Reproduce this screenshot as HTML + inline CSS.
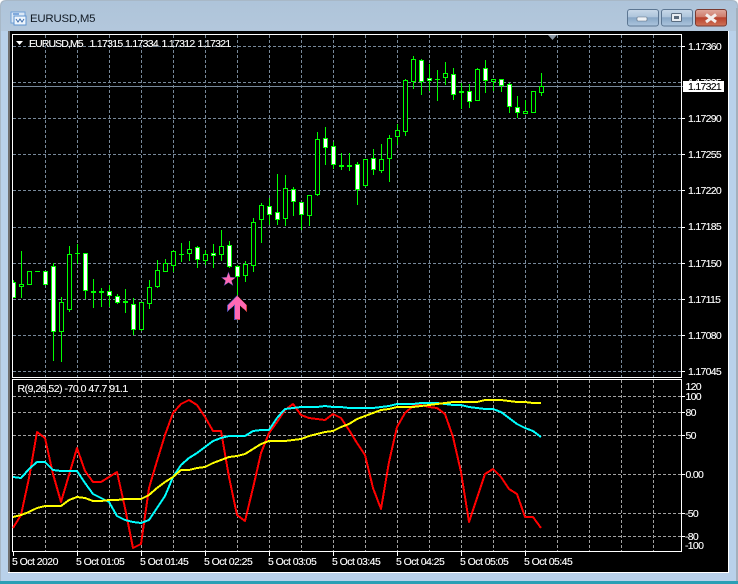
<!DOCTYPE html>
<html>
<head>
<meta charset="utf-8">
<style>
html,body{margin:0;padding:0;width:738px;height:584px;overflow:hidden;background:#fff}
svg{display:block}
text{font-family:"Liberation Sans",sans-serif;font-size:10.5px;fill:#fff;letter-spacing:-.7px;stroke:#fff;stroke-width:.12px}
.t{letter-spacing:-.55px}
</style>
</head>
<body>
<svg width="738" height="584" viewBox="0 0 738 584" xmlns="http://www.w3.org/2000/svg">
<defs>
<linearGradient id="tb" x1="0" y1="0" x2="0" y2="1"><stop offset="0" stop-color="#aec4da"/><stop offset=".06" stop-color="#b4c8dc"/><stop offset="1" stop-color="#bfd4e9"/></linearGradient>
<linearGradient id="btn" x1="0" y1="0" x2="0" y2="1"><stop offset="0" stop-color="#c9d9e9"/><stop offset=".45" stop-color="#aec5dc"/><stop offset=".5" stop-color="#88a7c6"/><stop offset="1" stop-color="#adc6de"/></linearGradient>
<linearGradient id="cls" x1="0" y1="0" x2="0" y2="1"><stop offset="0" stop-color="#dfa99d"/><stop offset=".45" stop-color="#cf7d6c"/><stop offset=".5" stop-color="#b8412c"/><stop offset="1" stop-color="#cf7458"/></linearGradient>
<clipPath id="pl"><rect x="13" y="35" width="668" height="342"/></clipPath>
</defs>

<!-- window frame -->
<path d="M0 6Q0 0 6 0H732Q738 0 738 6V584H0Z" fill="#a8b8c7"/>
<path d="M1 7Q1 1 7 1H731Q737 1 737 7V581H1Z" fill="url(#tb)"/>
<rect x="1" y="31" width="8" height="550" fill="#b9d1ea"/>
<rect x="729" y="31" width="7" height="550" fill="#b9d1ea"/>
<rect x="1" y="573" width="735" height="8" fill="#b9d1ea"/>
<rect x="0" y="581" width="738" height="3" fill="#2a9fb5"/>
<rect x="736" y="8" width="2" height="573" fill="#a3b0bc"/>
<rect x="8" y="31" width="721" height="542" fill="#fff"/>
<rect x="8" y="31" width="2" height="541" fill="#6f6f6f"/>
<rect x="10" y="31" width="718" height="541" fill="#000"/>

<!-- title -->
<g shape-rendering="crispEdges">
<rect x="11" y="12" width="14" height="11" fill="#dbe8f6" stroke="#6f9fd6"/>
<rect x="14" y="16" width="12" height="9" fill="#eef5fc" stroke="#5f93cf"/>
</g>
<path d="M16 19l2 3 2-3 2 3 2-3" fill="none" stroke="#3f6fae" stroke-width="1"/>
<rect x="13" y="13" width="6" height="2" fill="#7fa9dd"/>
<text x="30" y="22" style="font-size:11.4px;fill:#111a24;stroke:none;letter-spacing:-.2px">EURUSD,M5</text>

<!-- buttons -->
<rect x="627.5" y="9.5" width="31" height="16.5" rx="2.5" fill="url(#btn)" stroke="#5c7692"/>
<rect x="637" y="17" width="10" height="4" rx="1" fill="#eef2f6" stroke="#5a6c80" stroke-width=".6"/>
<rect x="661.5" y="9.5" width="31" height="16.5" rx="2.5" fill="url(#btn)" stroke="#5c7692"/>
<rect x="671.5" y="13.5" width="10" height="8" rx="1" fill="#e8edf3" stroke="#5a6c80"/>
<rect x="674" y="16" width="5" height="3" fill="#5b6b7d"/>
<rect x="695.5" y="9.5" width="31" height="16.5" rx="2.5" fill="url(#cls)" stroke="#7a3a30"/>
<path d="M706 14.5l10 7.5M716 14.5l-10 7.5" stroke="#f3eeec" stroke-width="3"/>

<!-- main grid -->
<g shape-rendering="crispEdges" fill="none" stroke="#778899" stroke-dasharray="3 2">
<path d="M13 46.5H681M13 82.5H681M13 118.5H681M13 154.5H681M13 190.5H681M13 227.5H681M13 263.5H681M13 299.5H681M13 335.5H681M13 371.5H681"/>
<path d="M45.5 35V377M77.5 35V377M109.5 35V377M141.5 35V377M173.5 35V377M205.5 35V377M237.5 35V377M269.5 35V377M301.5 35V377M333.5 35V377M365.5 35V377M397.5 35V377M429.5 35V377M461.5 35V377M493.5 35V377M525.5 35V377M557.5 35V377M589.5 35V377M621.5 35V377M653.5 35V377"/>
</g>
<rect x="13" y="86" width="670" height="1" fill="#778899"/>

<!-- candles -->
<g clip-path="url(#pl)" shape-rendering="crispEdges" stroke="#00ff00" stroke-width="1">
<path fill="none" d="M13.5 280V298M21.5 251V298M53.5 263V361M61.5 297V362M69.5 246V312M77.5 244V264M85.5 253V299M93.5 279V308M101.5 288V307M109.5 285V307M117.5 294V304M125.5 289V313M133.5 298V335M141.5 302V331M149.5 280V309M157.5 260V288M165.5 259V272M173.5 250V272M181.5 243V262M189.5 241V261M197.5 246V268M205.5 250V265M213.5 244V268M221.5 230V261M229.5 241V268M237.5 265V295M245.5 261V282M253.5 218V272M261.5 203V243M269.5 198V225M277.5 174V225M285.5 175V226M293.5 187V216M301.5 202V230M309.5 195V226M317.5 132V196M325.5 127V165M333.5 142V169M341.5 153V170M349.5 153V171M357.5 162V205M365.5 159V187M373.5 149V175M381.5 144V173M389.5 135V182M397.5 124V145M405.5 79V136M413.5 56V89M421.5 59V95M429.5 64V91M437.5 70V101M445.5 62V85M453.5 68V100M461.5 83V109M469.5 84V108M477.5 68V101M485.5 60V93M493.5 79V91M501.5 79V92M509.5 83V113M517.5 96V118M525.5 100V114M541.5 73V96"/>
<path fill="none" d="M35 271.5H40M75 253.5H80M179 254.5H184M435 79.5H440"/>
<path fill="#00ff00" d="M91.5 291.5h4v1h-4zM99.5 291.5h4v1h-4zM123.5 301.5h4v1h-4zM339.5 165.5h4v1h-4zM347.5 165.5h4v1h-4zM459.5 91.5h4v1h-4z"/>
<path fill="#000" d="M19.5 284.5h4v2h-4zM27.5 271.5h4v13h-4zM59.5 302.5h4v29h-4zM67.5 254.5h4v55h-4zM139.5 302.5h4v27h-4zM147.5 287.5h4v16h-4zM155.5 270.5h4v16h-4zM163.5 263.5h4v8h-4zM171.5 251.5h4v14h-4zM187.5 249.5h4v4h-4zM203.5 254.5h4v6h-4zM219.5 246.5h4v8h-4zM243.5 264.5h4v11h-4zM251.5 222.5h4v43h-4zM259.5 205.5h4v14h-4zM283.5 188.5h4v30h-4zM307.5 195.5h4v20h-4zM315.5 139.5h4v55h-4zM363.5 159.5h4v26h-4zM379.5 159.5h4v11h-4zM387.5 138.5h4v20h-4zM395.5 130.5h4v6h-4zM403.5 80.5h4v51h-4zM411.5 59.5h4v22h-4zM443.5 73.5h4v4h-4zM475.5 69.5h4v31h-4zM491.5 79.5h4v2h-4zM523.5 111.5h4v2h-4zM531.5 91.5h4v21h-4zM539.5 86.5h4v6h-4z"/>
<path fill="#fff" d="M11.5 282.5h4v15h-4zM43.5 271.5h4v13h-4zM51.5 266.5h4v65h-4zM83.5 253.5h4v37h-4zM107.5 291.5h4v4h-4zM115.5 296.5h4v6h-4zM131.5 304.5h4v25h-4zM195.5 247.5h4v12h-4zM211.5 253.5h4v2h-4zM227.5 245.5h4v21h-4zM235.5 266.5h4v10h-4zM267.5 206.5h4v8h-4zM275.5 212.5h4v7h-4zM291.5 189.5h4v12h-4zM299.5 202.5h4v12h-4zM323.5 138.5h4v9h-4zM331.5 146.5h4v18h-4zM355.5 164.5h4v25h-4zM371.5 158.5h4v11h-4zM419.5 60.5h4v21h-4zM427.5 78.5h4v2h-4zM451.5 74.5h4v20h-4zM467.5 91.5h4v10h-4zM483.5 68.5h4v12h-4zM499.5 79.5h4v6h-4zM507.5 84.5h4v22h-4zM515.5 107.5h4v5h-4z"/>
</g>

<!-- star and arrow -->
<polygon points="228.5,271.5 230.5,277 236,277.2 231.7,280.6 233.3,286 228.5,282.8 223.7,286 225.3,280.6 221,277.2 226.5,277" fill="#3a3f9a"/>
<polygon points="228.5,272.5 230.3,277.5 235.3,277.7 231.3,280.7 232.8,285 228.5,282.2 224.5,285 225.8,280.7 222,277.7 226.8,277.5" fill="#ff69b4"/>
<g shape-rendering="crispEdges">
<polygon points="237,295.5 247,305 247,312 240,306 240,320 237,320" fill="#d0403a"/>
<polygon points="237,295.5 227,305 227,312 234,306 234,320 237,320" fill="#4a4fb0"/>
<polygon points="237,296 246,305 246,310.5 239,304.5 239,319 235,319 235,304.5 228,310.5 228,305" fill="#ff69b4"/>
<rect x="235" y="303" width="5" height="16" fill="#ff69b4"/>
</g>

<!-- plot borders -->
<g shape-rendering="crispEdges" fill="none" stroke="#fff">
<rect x="12.5" y="34.5" width="669" height="343"/>
<rect x="12.5" y="379.5" width="669" height="172"/>
</g>
<polygon points="548,35 557,35 552.5,40" fill="#8a96a3"/>
<polygon points="16,41 23,41 19.5,45" fill="#fff"/>

<!-- header text -->
<text x="29" y="47" style="letter-spacing:-.9px">EURUSD,M5</text>
<text x="89.5" y="47">1.17315</text>
<text x="125" y="47">1.17334</text>
<text x="161.5" y="47">1.17312</text>
<text x="197.5" y="47">1.17321</text>

<!-- price axis -->
<g shape-rendering="crispEdges" fill="#fff">
<rect x="682" y="46" width="3" height="1"/><rect x="682" y="118" width="3" height="1"/><rect x="682" y="154" width="3" height="1"/><rect x="682" y="190" width="3" height="1"/><rect x="682" y="227" width="3" height="1"/><rect x="682" y="263" width="3" height="1"/><rect x="682" y="299" width="3" height="1"/><rect x="682" y="335" width="3" height="1"/><rect x="682" y="371" width="3" height="1"/>
</g>
<text x="688" y="50">1.17360</text>
<text x="688" y="86">1.17325</text>
<text x="688" y="122">1.17290</text>
<text x="688" y="158">1.17255</text>
<text x="688" y="194">1.17220</text>
<text x="688" y="230">1.17185</text>
<text x="688" y="267">1.17150</text>
<text x="688" y="303">1.17115</text>
<text x="688" y="339">1.17080</text>
<text x="688" y="375">1.17045</text>
<rect x="683" y="81" width="41" height="11" fill="#fff"/>
<text x="688" y="90" style="fill:#000;stroke:#000">1.17321</text>

<!-- sub window grid -->
<g shape-rendering="crispEdges" fill="none" stroke="#a2a2a2" stroke-dasharray="3 2">
<path d="M13 396.5H681M13 412.5H681M13 435.5H681M13 474.5H681M13 513.5H681M13 536.5H681"/>
<path d="M45.5 380V551M77.5 380V551M109.5 380V551M141.5 380V551M173.5 380V551M205.5 380V551M237.5 380V551M269.5 380V551M301.5 380V551M333.5 380V551M365.5 380V551M397.5 380V551M429.5 380V551M461.5 380V551M493.5 380V551M525.5 380V551M557.5 380V551M589.5 380V551M621.5 380V551M653.5 380V551"/>
</g>

<!-- indicator lines -->
<g fill="none" stroke-width="2" shape-rendering="crispEdges" stroke-linejoin="round">
<polyline stroke="#ff0000" points="13,528 21,515 29,478 37,432 45,438 53,474 61,502 69,475 77,448 85,471 93,482 101,482 109,477 117,472 125,508 133,548 141,544 149,488 157,461 165,435 173,413 181,404 189,400 197,405 205,417 213,431 221,431 229,477 237,515 245,521 253,488 261,453 269,433 277,422 285,410 293,404 301,415 309,418 317,419 325,420 333,414 341,418 349,430 357,443 365,455 373,488 381,509 389,462 397,427 405,413 413,406 421,405 429,407 437,408 445,414 453,437 461,472 469,522 477,498 485,474 493,469 501,477 509,489 517,494 525,517 533,517 541,528"/>
<polyline stroke="#00ffff" points="13,477 21,478 29,469 37,462 45,462 53,470 61,471 69,471 77,471 85,483 93,494 101,498 109,502 117,516 125,520 133,522 141,523 149,520 157,508 165,496 173,477 181,465 189,458 197,453 205,447 213,441 221,438 229,436 237,436 245,436 253,431 261,430 269,430 277,418 285,409 293,408 301,407 309,407 317,407 325,406 333,407 341,407 349,408 357,408 365,408 373,408 381,407 389,406 397,404 405,404 413,404 421,403 429,403 437,403 445,404 453,405 461,405 469,407 477,408 485,409 493,409 501,412 509,418 517,424 525,428 533,431 541,437"/>
<polyline stroke="#ffff00" points="13,517 21,515 29,512 37,508 45,506 53,506 61,506 69,500 77,497 85,498 93,501 101,501 109,500 117,500 125,499 133,499 141,499 149,495 157,488 165,482 173,477 181,470 189,470 197,468 205,467 213,463 221,460 229,457 237,456 245,454 253,449 261,444 269,441 277,441 285,441 293,440 301,439 309,436 317,434 325,432 333,431 341,427 349,424 357,419 365,416 373,413 381,410 389,409 397,407 405,407 413,407 421,406 429,405 437,404 445,403 453,402 461,402 469,402 477,402 485,400 493,400 501,400 509,401 517,402 525,402 533,403 541,403"/>
</g>

<text x="17.5" y="392" class="t" style="letter-spacing:-.5px">R(9,26,52) -70.0 47.7 91.1</text>

<!-- sub axis -->
<g shape-rendering="crispEdges" fill="#fff">
<rect x="682" y="396" width="3" height="1"/><rect x="682" y="412" width="3" height="1"/><rect x="682" y="435" width="3" height="1"/><rect x="682" y="474" width="3" height="1"/><rect x="682" y="513" width="3" height="1"/><rect x="682" y="536" width="3" height="1"/>
<rect x="13" y="552" width="1" height="4"/><rect x="77" y="552" width="1" height="4"/><rect x="141" y="552" width="1" height="4"/><rect x="205" y="552" width="1" height="4"/><rect x="269" y="552" width="1" height="4"/><rect x="333" y="552" width="1" height="4"/><rect x="397" y="552" width="1" height="4"/><rect x="461" y="552" width="1" height="4"/><rect x="525" y="552" width="1" height="4"/>
</g>
<text x="685.5" y="390">120</text>
<text x="685.5" y="400">100</text>
<text x="685.5" y="416">80</text>
<text x="685.5" y="439">50</text>
<text x="685.5" y="478">0.00</text>
<text x="685" y="517">-50</text>
<text x="685" y="540">-80</text>
<text x="685" y="549">-100</text>

<!-- time axis -->
<text x="12" y="565" class="t">5 Oct 2020</text>
<text x="76" y="565" class="t">5 Oct 01:05</text>
<text x="140" y="565" class="t">5 Oct 01:45</text>
<text x="204" y="565" class="t">5 Oct 02:25</text>
<text x="268" y="565" class="t">5 Oct 03:05</text>
<text x="332" y="565" class="t">5 Oct 03:45</text>
<text x="396" y="565" class="t">5 Oct 04:25</text>
<text x="460" y="565" class="t">5 Oct 05:05</text>
<text x="524" y="565" class="t">5 Oct 05:45</text>
</svg>
</body>
</html>
